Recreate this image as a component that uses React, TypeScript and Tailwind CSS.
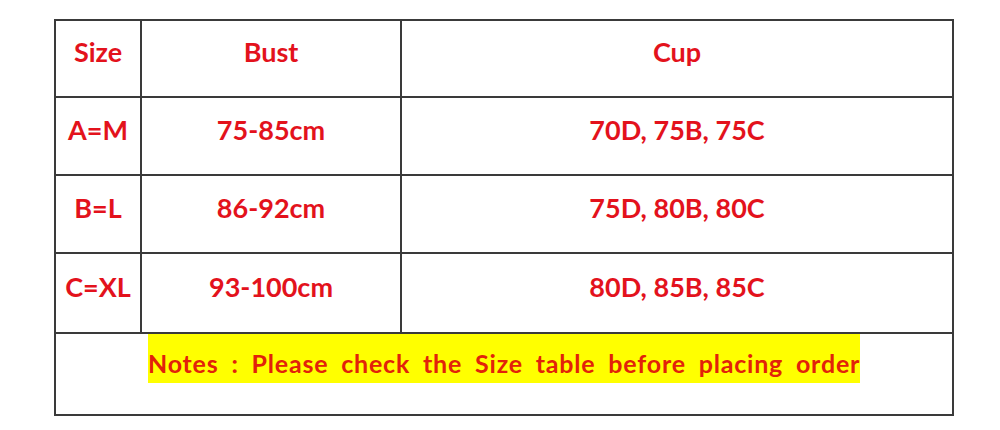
import React from "react";

const rows = [
  ["A=M", "75-85cm", "70D, 75B, 75C"],
  ["B=L", "86-92cm", "75D, 80B, 80C"],
  ["C=XL", "93-100cm", "80D, 85B, 85C"],
];

export default function App() {
  return (
    <div className="w-[1000px] h-[430px] bg-white pt-[19px] pl-[54px]" style={{ fontFamily: "Lato, 'Open Sans', sans-serif" }}>
      <div className="w-[900px] border-2 border-[#3a3a3a] font-bold text-[27px] text-[#e3121c]">
        <div className="grid grid-cols-[86px_260px_1fr] h-[77px] border-b-2 border-[#3a3a3a]">
          <div className="flex items-center justify-center pb-3 border-r-2 border-[#3a3a3a]">Size</div>
          <div className="flex items-center justify-center pb-3 border-r-2 border-[#3a3a3a]">Bust</div>
          <div className="flex items-center justify-center pb-3">Cup</div>
        </div>
        {rows.map((r, i) => (
          <div
            key={i}
            className={`grid grid-cols-[86px_260px_1fr] border-b-2 border-[#3a3a3a] ${i === 2 ? "h-[80px]" : "h-[78px]"}`}
          >
            <div className="flex items-center justify-center pb-3 border-r-2 border-[#3a3a3a]">{r[0]}</div>
            <div className="flex items-center justify-center pb-3 border-r-2 border-[#3a3a3a]">{r[1]}</div>
            <div className="flex items-center justify-center pb-3">{r[2]}</div>
          </div>
        ))}
        <div className="h-[80px] flex justify-center items-start">
          <span className="inline-block h-[49px] w-[712px] bg-[#ffff00] pt-[14px] text-center text-[25px] leading-[30px] tracking-[0.8px] text-[#e2220a] whitespace-nowrap [word-spacing:6px]">
            Notes : Please check the Size table before placing order
          </span>
        </div>
      </div>
    </div>
  );
}
